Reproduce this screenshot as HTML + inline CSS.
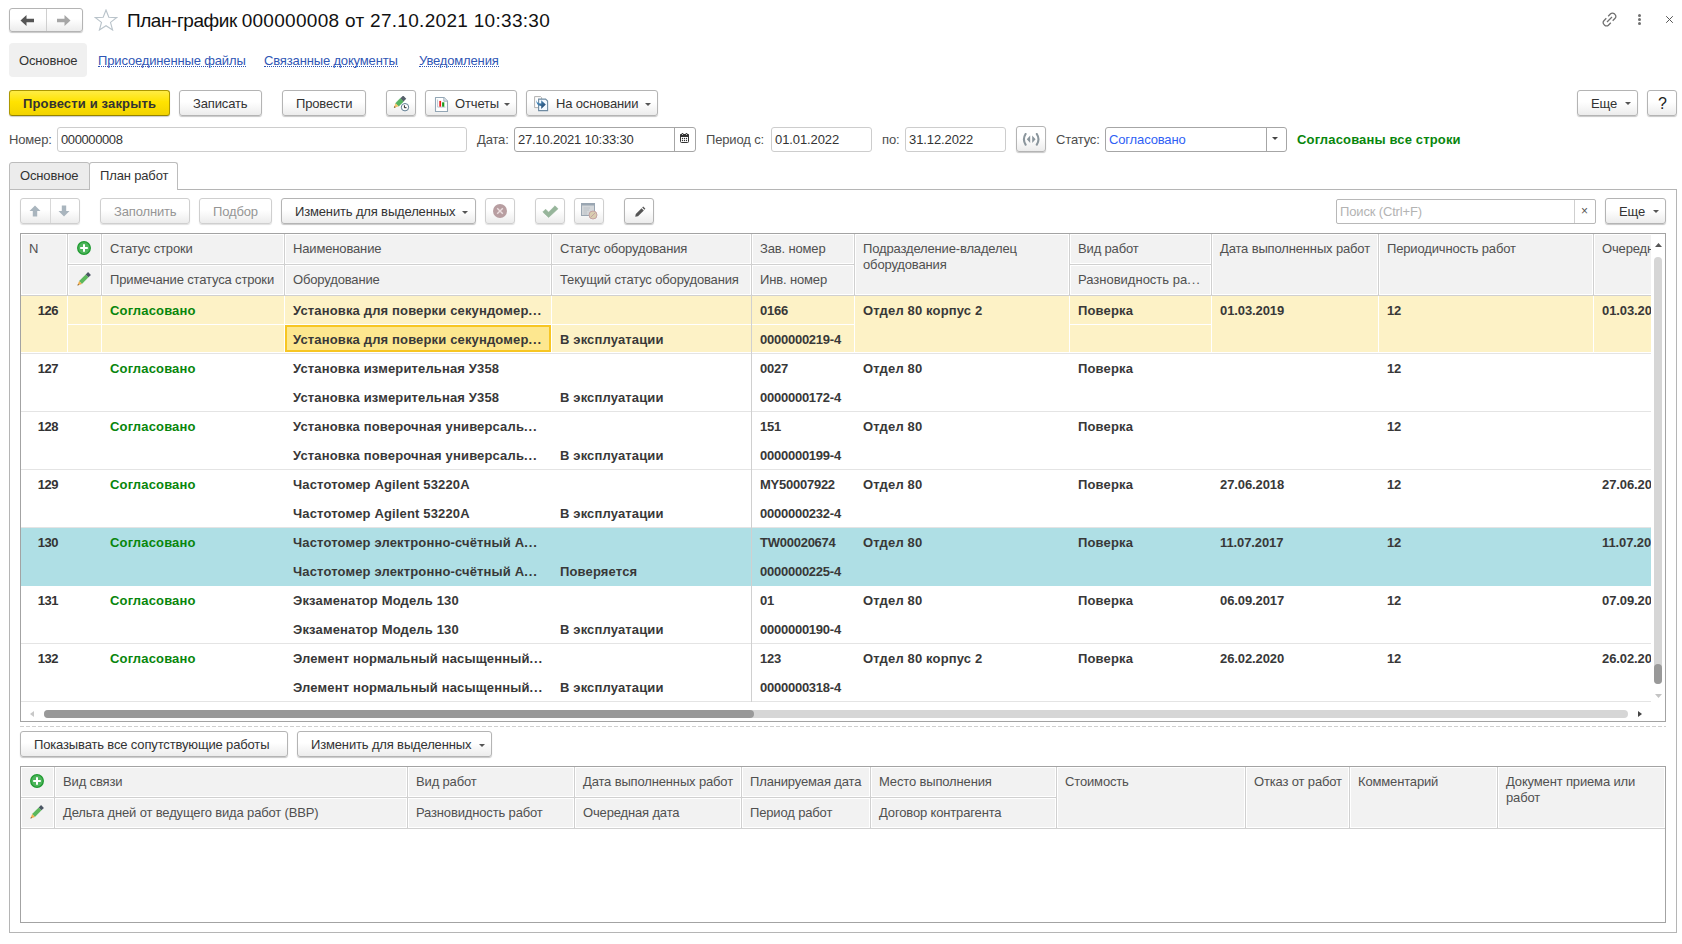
<!DOCTYPE html><html><head><meta charset="utf-8"><title>План-график</title><style>
*{box-sizing:border-box;margin:0;padding:0}
html,body{width:1682px;height:944px;overflow:hidden;background:#fff}
body{position:relative;font-family:"Liberation Sans",sans-serif;font-size:13px;color:#333;line-height:16px;letter-spacing:-0.15px}
.a{position:absolute;white-space:nowrap}
.t{position:absolute;white-space:nowrap;line-height:16px;height:16px}
.btn{position:absolute;border:1px solid #b4b4b4;border-radius:3px;background:linear-gradient(#fff 0%,#fff 45%,#ececec 100%);box-shadow:0 1px 1px rgba(0,0,0,.22)}
.btn.dis{border-color:#cfcfcf;box-shadow:0 1px 1px rgba(0,0,0,.12)}
.inp{position:absolute;border:1px solid #cdcdcd;border-radius:3px;background:#fff}
.inp.dk{border-color:#a6a6a6}
.b{font-weight:bold;letter-spacing:0.15px}
.g{color:#08860c}
.lnk{color:#3056b5;border-bottom:1px dotted #3056b5;display:inline-block;height:14px;line-height:16px}
.hd{position:absolute;background:#f2f2f2}
.vl{position:absolute;width:1px;background:#d4d4d4}
.hl{position:absolute;height:1px;background:#d4d4d4}
.dd{position:absolute;width:6px;height:3px;background:#555;clip-path:polygon(0 0,100% 0,50% 100%)}
</style></head><body>
<div class="btn " style="left:9px;top:8px;width:74px;height:24px"><div style="position:absolute;left:36px;top:0;width:1px;height:22px;background:#cfcfcf"></div><svg style="position:absolute;left:10px;top:5px" width="16" height="13" viewBox="0 0 16 13"><path d="M0.5 6.5 L6.5 1 V4.8 H14 V8.2 H6.5 V12 Z" fill="#555"/></svg><svg style="position:absolute;left:45px;top:5px" width="16" height="13" viewBox="0 0 16 13"><path d="M15.5 6.5 L9.5 1 V4.8 H2 V8.2 H9.5 V12 Z" fill="#a6a6a6"/></svg></div>
<svg class="a" style="left:94px;top:9px" width="24" height="22" viewBox="0 0 24 22"><path d="M12 1 L14.8 8.2 L22.6 8.6 L16.5 13.4 L18.6 21 L12 16.7 L5.4 21 L7.5 13.4 L1.4 8.6 L9.2 8.2 Z" fill="none" stroke="#b9c3ca" stroke-width="1.1"/></svg>
<div class="a" style="left:127px;top:10px;font-size:19px;line-height:22px;color:#111;letter-spacing:0.3px"><span style="letter-spacing:-0.45px">План-график </span>000000008 от 27.10.2021 10:33:30</div>
<svg class="a" style="left:1601px;top:11px" width="17" height="17" viewBox="0 0 17 17"><g fill="none" stroke="#707070" stroke-width="1.3"><path d="M7.2 5.2 L9.6 2.8 a2.6 2.6 0 0 1 3.7 0 l0.8 0.8 a2.6 2.6 0 0 1 0 3.7 L11.7 9.7"/><path d="M9.8 11.8 L7.4 14.2 a2.6 2.6 0 0 1 -3.7 0 l-0.8 -0.8 a2.6 2.6 0 0 1 0 -3.7 L5.3 7.3"/><path d="M6 11 L11 6"/></g></svg>
<svg class="a" style="left:1636px;top:12px" width="7" height="15" viewBox="0 0 7 15"><circle cx="3.5" cy="3.6" r="1.5" fill="#707070"/><circle cx="3.5" cy="7.6" r="1.5" fill="#707070"/><circle cx="3.5" cy="11.6" r="1.5" fill="#707070"/></svg>
<svg class="a" style="left:1666px;top:16px" width="7" height="7" viewBox="0 0 7 7"><path d="M0.2 0.2 L6.8 6.8 M6.8 0.2 L0.2 6.8" stroke="#555" stroke-width="1"/></svg>
<div class="a" style="left:9px;top:43px;width:78px;height:34px;background:#f0f0f0;border-radius:4px"></div>
<div class="t " style="left:19px;top:53px;">Основное</div>
<div class="t " style="left:98px;top:53px;"><span class="lnk">Присоединенные файлы</span></div>
<div class="t " style="left:264px;top:53px;"><span class="lnk">Связанные документы</span></div>
<div class="t " style="left:419px;top:53px;"><span class="lnk">Уведомления</span></div>
<div class="a" style="left:9px;top:90px;width:161px;height:26px;border:1px solid #ad9800;border-bottom-color:#948300;border-radius:3px;background:linear-gradient(#ffec45 0%,#ffe300 45%,#f2d300 100%);box-shadow:0 1px 1px rgba(0,0,0,.2)"></div>
<div class="t b" style="left:23px;top:96px;color:#333">Провести и закрыть</div>
<div class="btn " style="left:179px;top:90px;width:83px;height:26px"></div>
<div class="t " style="left:193px;top:96px;">Записать</div>
<div class="btn " style="left:282px;top:90px;width:84px;height:26px"></div>
<div class="t " style="left:296px;top:96px;">Провести</div>
<div class="btn " style="left:386px;top:90px;width:30px;height:26px"><svg style="position:absolute;left:3px;top:5px" width="20" height="17" viewBox="0 0 20 17"><path d="M5.51 7.17 L10.42 2.27 L13.53 5.38 L8.63 10.29 Z" fill="#55b560" stroke="#3a9a48" stroke-width="0.4"/><path d="M10.42 2.27 L13.14 -0.46 L16.26 2.66 L13.53 5.38 Z" fill="#56606b"/><path d="M3.8 12 L5.51 7.17 L8.63 10.29 Z" fill="#f4c36b"/><path d="M3.8 12 L4.49 10.07 L5.73 11.31 Z" fill="#6b5a3a"/><circle cx="15" cy="11.2" r="3.7" fill="#fff" stroke="#5f7d92" stroke-width="1"/><path d="M14.4 9.3 V11.7 H16.5" fill="none" stroke="#222" stroke-width="1"/></svg></div>
<div class="btn " style="left:425px;top:90px;width:92px;height:26px"><svg style="position:absolute;left:8px;top:5px" width="15" height="17" viewBox="0 0 15 17"><path d="M1.5 1.5 H9.8 L13.5 5.2 V15.5 H1.5 Z" fill="#fff" stroke="#93a6b5" stroke-width="1.1" stroke-linejoin="round"/><path d="M9.8 1.5 V5.2 H13.5" fill="#dfe6ec" stroke="#93a6b5" stroke-width="0.8"/><path d="M3.6 3.5 V11.1 H11.5" fill="none" stroke="#9fb0c0" stroke-width="0.7"/><rect x="5.3" y="4.9" width="1.8" height="5.8" fill="#ee1c1c"/><rect x="8.1" y="6.3" width="2.2" height="4.4" fill="#1c9a1c"/></svg></div>
<div class="t " style="left:455px;top:96px;">Отчеты</div>
<div class="dd" style="left:504px;top:103px"></div>
<div class="btn " style="left:526px;top:90px;width:132px;height:26px"><svg style="position:absolute;left:6px;top:4px" width="17" height="17" viewBox="0 0 17 17"><defs><linearGradient id="ga" x1="0" y1="0" x2="1" y2="1"><stop offset="0" stop-color="#5aa6dc"/><stop offset="1" stop-color="#1b3a5e"/></linearGradient></defs><path d="M1.6 1.6 H7.6 L8.6 2.6 V12.6 H1.6 Z" fill="#fff" stroke="#a8a8a8" stroke-width="0.9"/><path d="M5.6 4.1 H12.6 L14.6 6.1 V15.6 H5.6 Z" fill="#f3f9ff" stroke="#6f8ba2" stroke-width="1.1"/><path d="M3 4.5 Q3.6 8.4 8.2 8.4 V5.2 L12.8 9.6 L8.2 13.9 V10.9 Q3 10.6 3 4.5 Z" fill="url(#ga)"/></svg></div>
<div class="t " style="left:556px;top:96px;">На основании</div>
<div class="dd" style="left:645px;top:103px"></div>
<div class="btn " style="left:1577px;top:90px;width:61px;height:26px"></div>
<div class="t " style="left:1591px;top:96px;">Еще</div>
<div class="dd" style="left:1625px;top:102px"></div>
<div class="btn " style="left:1647px;top:90px;width:30px;height:26px"></div>
<div class="a" style="left:1658px;top:94px;font-size:16px;line-height:20px;color:#222">?</div>
<div class="t " style="left:9px;top:132px;color:#4d4d4d">Номер:</div>
<div class="inp" style="left:57px;top:127px;width:410px;height:25px"></div>
<div class="t " style="left:61px;top:132px;letter-spacing:-0.4px">000000008</div>
<div class="t " style="left:477px;top:132px;color:#4d4d4d">Дата:</div>
<div class="inp dk" style="left:514px;top:127px;width:182px;height:25px"><div style="position:absolute;left:159px;top:0;width:1px;height:23px;background:#a6a6a6"></div><svg style="position:absolute;left:165px;top:5px" width="9" height="10" viewBox="0 0 9 10"><rect x="0.5" y="1.5" width="8" height="8" rx="1" fill="#fff" stroke="#333" stroke-width="1"/><rect x="0" y="1" width="9" height="3" rx="1" fill="#333"/><circle cx="2.5" cy="1" r="1" fill="#333"/><circle cx="6.5" cy="1" r="1" fill="#333"/><circle cx="2.5" cy="1.6" r="0.5" fill="#fff"/><circle cx="6.5" cy="1.6" r="0.5" fill="#fff"/><g fill="#333"><circle cx="2.5" cy="5.5" r="0.65"/><circle cx="4.5" cy="5.5" r="0.65"/><circle cx="6.5" cy="5.5" r="0.65"/><circle cx="2.5" cy="7.5" r="0.65"/><circle cx="4.5" cy="7.5" r="0.65"/><circle cx="6.5" cy="7.5" r="0.65"/></g></svg></div>
<div class="t " style="left:518px;top:132px;letter-spacing:-0.2px">27.10.2021 10:33:30</div>
<div class="t " style="left:706px;top:132px;color:#4d4d4d">Период с:</div>
<div class="inp" style="left:771px;top:127px;width:101px;height:25px"></div>
<div class="t " style="left:775px;top:132px;letter-spacing:-0.1px">01.01.2022</div>
<div class="t " style="left:882px;top:132px;color:#4d4d4d">по:</div>
<div class="inp" style="left:905px;top:127px;width:101px;height:25px"></div>
<div class="t " style="left:909px;top:132px;letter-spacing:-0.1px">31.12.2022</div>
<div class="btn " style="left:1016px;top:126px;width:30px;height:26px"><svg style="position:absolute;left:5px;top:6px" width="19" height="13" viewBox="0 0 19 13"><path d="M3.6 1 Q0.2 6.3 3.6 11.6" fill="none" stroke="#8b969d" stroke-width="2.1" stroke-linecap="round"/><path d="M14.8 1 Q18.2 6.3 14.8 11.6" fill="none" stroke="#8b969d" stroke-width="2.1" stroke-linecap="round"/><path d="M8.2 2.6 L4.8 6.3 L8.2 10 Z M10.2 2.6 L13.6 6.3 L10.2 10 Z" fill="#8b969d"/></svg></div>
<div class="t " style="left:1056px;top:132px;color:#4d4d4d">Статус:</div>
<div class="inp dk" style="left:1105px;top:127px;width:182px;height:25px"><div style="position:absolute;left:160px;top:0;width:1px;height:23px;background:#a6a6a6"></div><div class="dd" style="left:166px;top:9px;width:6px;height:3px;background:#444"></div></div>
<div class="t " style="left:1109px;top:132px;color:#2f5ff5">Согласовано</div>
<div class="t b g" style="left:1297px;top:132px;">Согласованы все строки</div>
<div class="a" style="left:9px;top:189px;width:1668px;height:744px;border:1px solid #b5b5b5"></div>
<div class="a" style="left:9px;top:162px;width:81px;height:28px;background:#ececec;border:1px solid #bcbcbc;border-radius:3px 3px 0 0"></div>
<div class="a" style="left:89px;top:162px;width:89px;height:28px;background:#fff;border:1px solid #bcbcbc;border-bottom:none;border-radius:3px 3px 0 0"></div>
<div class="t " style="left:20px;top:168px;">Основное</div>
<div class="t " style="left:100px;top:168px;">План работ</div>
<div class="btn dis" style="left:20px;top:198px;width:60px;height:26px"><div style="position:absolute;left:29px;top:0;width:1px;height:24px;background:#d8d8d8"></div><svg style="position:absolute;left:8px;top:6px" width="12" height="12" viewBox="0 0 12 12"><path d="M6 0.5 L11.5 6 H8.2 V11.5 H3.8 V6 H0.5 Z" fill="#a9b5be"/></svg><svg style="position:absolute;left:37px;top:6px" width="12" height="12" viewBox="0 0 12 12"><path d="M6 11.5 L11.5 6 H8.2 V0.5 H3.8 V6 H0.5 Z" fill="#a9b5be"/></svg></div>
<div class="btn dis" style="left:100px;top:198px;width:90px;height:26px"></div>
<div class="t " style="left:114px;top:204px;color:#959595">Заполнить</div>
<div class="btn dis" style="left:199px;top:198px;width:73px;height:26px"></div>
<div class="t " style="left:213px;top:204px;color:#959595">Подбор</div>
<div class="btn " style="left:281px;top:198px;width:195px;height:26px"></div>
<div class="t " style="left:295px;top:204px;">Изменить для выделенных</div>
<div class="dd" style="left:462px;top:211px"></div>
<div class="btn dis" style="left:485px;top:198px;width:30px;height:26px"><svg style="position:absolute;left:7px;top:5px" width="14" height="14" viewBox="0 0 14 14"><circle cx="7" cy="7" r="7" fill="#b89ea1"/><path d="M4.2 4.2 L9.8 9.8 M9.8 4.2 L4.2 9.8" stroke="#ecdfe0" stroke-width="1.4"/></svg></div>
<div class="btn dis" style="left:535px;top:198px;width:30px;height:26px"><svg style="position:absolute;left:6px;top:5px" width="17" height="14" viewBox="0 0 17 14"><path d="M0.8 8 L3.6 5.2 L6.6 8.2 L13 1.8 L16 4.8 L6.6 13.4 Z" fill="#97b59b" stroke="#97b59b" stroke-width="0.6" stroke-linejoin="round"/></svg></div>
<div class="btn dis" style="left:574px;top:198px;width:30px;height:26px"><svg style="position:absolute;left:6px;top:4px" width="17" height="17" viewBox="0 0 17 17"><rect x="0.5" y="0.5" width="13" height="12" fill="#d3d6d9" stroke="#9aa6b2"/><rect x="0.5" y="0.5" width="13" height="2" fill="#9aa6b2"/><path d="M2.5 5 H9 M2.5 7 H8 M2.5 9 H6 M2.5 11 H6" stroke="#b8bec4" stroke-width="0.8"/><circle cx="12" cy="12" r="4" fill="#d9cdb0" stroke="#c4a3a3" stroke-width="1"/><path d="M9.5 14.5 L14.5 9.5" stroke="#c4a3a3" stroke-width="1"/></svg></div>
<div class="btn " style="left:624px;top:198px;width:30px;height:26px"><svg style="position:absolute;left:9px;top:7px" width="12" height="12" viewBox="0 0 12 12"><path d="M1.2 10.8 L1.8 8 L7.6 2.2 L9.8 4.4 L4 10.2 Z" fill="#555"/><path d="M8.2 1.6 L9.2 0.6 L11.4 2.8 L10.4 3.8 Z" fill="#555"/></svg></div>
<div class="inp dk" style="left:1336px;top:199px;width:260px;height:25px;border-color:#b8b8b8;border-radius:2px"><div style="position:absolute;left:237px;top:0;width:1px;height:23px;background:#cfcfcf"></div><div style="position:absolute;left:244px;top:3px;font-size:12px;color:#555">×</div></div>
<div class="t " style="left:1340px;top:204px;color:#b3b3b3">Поиск (Ctrl+F)</div>
<div class="btn " style="left:1605px;top:198px;width:61px;height:26px"></div>
<div class="t " style="left:1619px;top:204px;">Еще</div>
<div class="dd" style="left:1653px;top:210px"></div>
<div class="a" style="left:20px;top:233px;width:1646px;height:489px;border:1px solid #a3a3a3;background:#fff"></div>
<div class="a" style="left:21px;top:234px;width:1630px;height:62px;background:#d0d0d0"></div>
<div class="a" style="left:21px;top:234px;width:46px;height:61px;background:#f2f2f2;box-shadow:inset 0 0 0 1px #fff"></div>
<div class="a" style="left:68px;top:234px;width:33px;height:30px;background:#f2f2f2;box-shadow:inset 0 0 0 1px #fff"></div>
<div class="a" style="left:68px;top:265px;width:33px;height:30px;background:#f2f2f2;box-shadow:inset 0 0 0 1px #fff"></div>
<div class="a" style="left:102px;top:234px;width:182px;height:30px;background:#f2f2f2;box-shadow:inset 0 0 0 1px #fff"></div>
<div class="a" style="left:102px;top:265px;width:182px;height:30px;background:#f2f2f2;box-shadow:inset 0 0 0 1px #fff"></div>
<div class="a" style="left:285px;top:234px;width:266px;height:30px;background:#f2f2f2;box-shadow:inset 0 0 0 1px #fff"></div>
<div class="a" style="left:285px;top:265px;width:266px;height:30px;background:#f2f2f2;box-shadow:inset 0 0 0 1px #fff"></div>
<div class="a" style="left:552px;top:234px;width:199px;height:30px;background:#f2f2f2;box-shadow:inset 0 0 0 1px #fff"></div>
<div class="a" style="left:552px;top:265px;width:199px;height:30px;background:#f2f2f2;box-shadow:inset 0 0 0 1px #fff"></div>
<div class="a" style="left:752px;top:234px;width:102px;height:30px;background:#f2f2f2;box-shadow:inset 0 0 0 1px #fff"></div>
<div class="a" style="left:752px;top:265px;width:102px;height:30px;background:#f2f2f2;box-shadow:inset 0 0 0 1px #fff"></div>
<div class="a" style="left:855px;top:234px;width:214px;height:61px;background:#f2f2f2;box-shadow:inset 0 0 0 1px #fff"></div>
<div class="a" style="left:1070px;top:234px;width:141px;height:30px;background:#f2f2f2;box-shadow:inset 0 0 0 1px #fff"></div>
<div class="a" style="left:1070px;top:265px;width:141px;height:30px;background:#f2f2f2;box-shadow:inset 0 0 0 1px #fff"></div>
<div class="a" style="left:1212px;top:234px;width:166px;height:61px;background:#f2f2f2;box-shadow:inset 0 0 0 1px #fff"></div>
<div class="a" style="left:1379px;top:234px;width:214px;height:61px;background:#f2f2f2;box-shadow:inset 0 0 0 1px #fff"></div>
<div class="a" style="left:1594px;top:234px;width:58px;height:61px;background:#f2f2f2;box-shadow:inset 0 0 0 1px #fff"></div>
<div class="t " style="left:29px;top:241px;color:#505050">N</div>
<svg class="a" style="left:77px;top:241px" width="14" height="14" viewBox="0 0 14 14"><circle cx="7" cy="7" r="6.3" fill="#4db55b" stroke="#1f9a30" stroke-width="1.3"/><path d="M7 3.2 V10.8 M3.2 7 H10.8" stroke="#fff" stroke-width="2"/></svg>
<svg class="a" style="left:76px;top:272px" width="15" height="15" viewBox="0 0 15 15"><path d="M3.09 9.09 L9.69 2.49 L12.51 5.31 L5.91 11.91 Z" fill="#5cb85c"/><path d="M9.69 2.49 L12.09 0.09 L14.91 2.91 L12.51 5.31 Z" fill="#4a5563"/><path d="M1.5 13.5 L3.09 9.09 L5.91 11.91 Z" fill="#f0ad4e"/><path d="M1.5 13.5 L2.01 12.09 L2.91 12.99 Z" fill="#333"/></svg>
<div class="t " style="left:110px;top:241px;color:#505050">Статус строки</div>
<div class="t " style="left:110px;top:272px;color:#505050">Примечание статуса строки</div>
<div class="t " style="left:293px;top:241px;color:#505050">Наименование</div>
<div class="t " style="left:293px;top:272px;color:#505050">Оборудование</div>
<div class="t " style="left:560px;top:241px;color:#505050">Статус оборудования</div>
<div class="t " style="left:560px;top:272px;color:#505050">Текущий статус оборудования</div>
<div class="t " style="left:760px;top:241px;color:#505050">Зав. номер</div>
<div class="t " style="left:760px;top:272px;color:#505050">Инв. номер</div>
<div class="t " style="left:863px;top:241px;color:#505050">Подразделение-владелец</div>
<div class="t " style="left:863px;top:257px;color:#505050">оборудования</div>
<div class="t " style="left:1078px;top:241px;color:#505050">Вид работ</div>
<div class="t " style="left:1078px;top:272px;color:#505050;letter-spacing:0px">Разновидность ра<span style="letter-spacing:0.9px">...</span></div>
<div class="t " style="left:1220px;top:241px;color:#505050">Дата выполненных работ</div>
<div class="t " style="left:1387px;top:241px;color:#505050">Периодичность работ</div>
<div class="a" style="left:1594px;top:234px;width:57px;height:40px;overflow:hidden"><div class="t" style="left:8px;top:7px;color:#505050">Очередная дата</div></div>
<div class="a" style="left:21px;top:296px;width:1630px;height:406px;overflow:hidden">
<div class="a" style="left:0;top:0px;width:1630px;height:56px;background:#fdf2c6"></div>
<div class="a" style="left:46px;top:0px;width:1px;height:57px;background:#fff"></div>
<div class="a" style="left:80px;top:0px;width:1px;height:57px;background:#fff"></div>
<div class="a" style="left:263px;top:0px;width:1px;height:57px;background:#fff"></div>
<div class="a" style="left:530px;top:0px;width:1px;height:57px;background:#fff"></div>
<div class="a" style="left:730px;top:0px;width:1px;height:57px;background:#fff"></div>
<div class="a" style="left:833px;top:0px;width:1px;height:57px;background:#fff"></div>
<div class="a" style="left:1048px;top:0px;width:1px;height:57px;background:#fff"></div>
<div class="a" style="left:1190px;top:0px;width:1px;height:57px;background:#fff"></div>
<div class="a" style="left:1357px;top:0px;width:1px;height:57px;background:#fff"></div>
<div class="a" style="left:1572px;top:0px;width:1px;height:57px;background:#fff"></div>
<div class="a" style="left:46px;top:28px;width:684px;height:1px;background:#fff"></div>
<div class="a" style="left:730px;top:28px;width:103px;height:1px;background:#fff"></div>
<div class="a" style="left:1048px;top:28px;width:142px;height:1px;background:#fff"></div>
<div class="a" style="left:0;top:56px;width:1630px;height:1px;background:#fff"></div>
<div class="a" style="left:264px;top:29px;width:266px;height:27px;border:2px solid #f7c623;background:#fde78f"></div>
<div class="a" style="left:0;top:57px;width:1630px;height:1px;background:#e4e4e4"></div>
<div class="t b" style="left:-1px;top:7px;width:38px;text-align:right;letter-spacing:-0.5px">126</div>
<div class="t b g" style="left:89px;top:7px;letter-spacing:0.15px">Согласовано</div>
<div class="t b" style="left:272px;top:7px;color:#383838;letter-spacing:0.15px">Установка для поверки секундомер<span style="letter-spacing:0.9px">...</span></div>
<div class="t b" style="left:272px;top:36px;color:#383838;letter-spacing:0.15px">Установка для поверки секундомер<span style="letter-spacing:0.9px">...</span></div>
<div class="t b" style="left:539px;top:36px;color:#383838;letter-spacing:0.15px">В эксплуатации</div>
<div class="t b" style="left:739px;top:7px;color:#383838;letter-spacing:-0.25px">0166</div>
<div class="t b" style="left:739px;top:36px;color:#383838;letter-spacing:-0.25px">0000000219-4</div>
<div class="t b" style="left:842px;top:7px;color:#383838;letter-spacing:0.15px">Отдел 80 корпус 2</div>
<div class="t b" style="left:1057px;top:7px;color:#383838;letter-spacing:0.15px">Поверка</div>
<div class="t b" style="left:1199px;top:7px;color:#383838;letter-spacing:-0.1px">01.03.2019</div>
<div class="t b" style="left:1366px;top:7px;color:#383838;letter-spacing:-0.25px">12</div>
<div class="t b" style="left:1581px;top:7px;color:#383838;letter-spacing:-0.1px">01.03.20</div>
<div class="a" style="left:0;top:115px;width:1630px;height:1px;background:#e4e4e4"></div>
<div class="t b" style="left:-1px;top:65px;width:38px;text-align:right;letter-spacing:-0.5px">127</div>
<div class="t b g" style="left:89px;top:65px;letter-spacing:0.15px">Согласовано</div>
<div class="t b" style="left:272px;top:65px;color:#383838;letter-spacing:0.15px">Установка измерительная У358</div>
<div class="t b" style="left:272px;top:94px;color:#383838;letter-spacing:0.15px">Установка измерительная У358</div>
<div class="t b" style="left:539px;top:94px;color:#383838;letter-spacing:0.15px">В эксплуатации</div>
<div class="t b" style="left:739px;top:65px;color:#383838;letter-spacing:-0.25px">0027</div>
<div class="t b" style="left:739px;top:94px;color:#383838;letter-spacing:-0.25px">0000000172-4</div>
<div class="t b" style="left:842px;top:65px;color:#383838;letter-spacing:0.15px">Отдел 80</div>
<div class="t b" style="left:1057px;top:65px;color:#383838;letter-spacing:0.15px">Поверка</div>
<div class="t b" style="left:1199px;top:65px;color:#383838;letter-spacing:-0.1px"></div>
<div class="t b" style="left:1366px;top:65px;color:#383838;letter-spacing:-0.25px">12</div>
<div class="t b" style="left:1581px;top:65px;color:#383838;letter-spacing:-0.1px"></div>
<div class="a" style="left:0;top:173px;width:1630px;height:1px;background:#e4e4e4"></div>
<div class="t b" style="left:-1px;top:123px;width:38px;text-align:right;letter-spacing:-0.5px">128</div>
<div class="t b g" style="left:89px;top:123px;letter-spacing:0.15px">Согласовано</div>
<div class="t b" style="left:272px;top:123px;color:#383838;letter-spacing:0.15px">Установка поверочная универсаль<span style="letter-spacing:0.9px">...</span></div>
<div class="t b" style="left:272px;top:152px;color:#383838;letter-spacing:0.15px">Установка поверочная универсаль<span style="letter-spacing:0.9px">...</span></div>
<div class="t b" style="left:539px;top:152px;color:#383838;letter-spacing:0.15px">В эксплуатации</div>
<div class="t b" style="left:739px;top:123px;color:#383838;letter-spacing:-0.25px">151</div>
<div class="t b" style="left:739px;top:152px;color:#383838;letter-spacing:-0.25px">0000000199-4</div>
<div class="t b" style="left:842px;top:123px;color:#383838;letter-spacing:0.15px">Отдел 80</div>
<div class="t b" style="left:1057px;top:123px;color:#383838;letter-spacing:0.15px">Поверка</div>
<div class="t b" style="left:1199px;top:123px;color:#383838;letter-spacing:-0.1px"></div>
<div class="t b" style="left:1366px;top:123px;color:#383838;letter-spacing:-0.25px">12</div>
<div class="t b" style="left:1581px;top:123px;color:#383838;letter-spacing:-0.1px"></div>
<div class="a" style="left:0;top:231px;width:1630px;height:1px;background:#e4e4e4"></div>
<div class="t b" style="left:-1px;top:181px;width:38px;text-align:right;letter-spacing:-0.5px">129</div>
<div class="t b g" style="left:89px;top:181px;letter-spacing:0.15px">Согласовано</div>
<div class="t b" style="left:272px;top:181px;color:#383838;letter-spacing:0.15px">Частотомер Agilent 53220A</div>
<div class="t b" style="left:272px;top:210px;color:#383838;letter-spacing:0.15px">Частотомер Agilent 53220A</div>
<div class="t b" style="left:539px;top:210px;color:#383838;letter-spacing:0.15px">В эксплуатации</div>
<div class="t b" style="left:739px;top:181px;color:#383838;letter-spacing:-0.25px">MY50007922</div>
<div class="t b" style="left:739px;top:210px;color:#383838;letter-spacing:-0.25px">0000000232-4</div>
<div class="t b" style="left:842px;top:181px;color:#383838;letter-spacing:0.15px">Отдел 80</div>
<div class="t b" style="left:1057px;top:181px;color:#383838;letter-spacing:0.15px">Поверка</div>
<div class="t b" style="left:1199px;top:181px;color:#383838;letter-spacing:-0.1px">27.06.2018</div>
<div class="t b" style="left:1366px;top:181px;color:#383838;letter-spacing:-0.25px">12</div>
<div class="t b" style="left:1581px;top:181px;color:#383838;letter-spacing:-0.1px">27.06.20</div>
<div class="a" style="left:0;top:232px;width:1630px;height:58px;background:#afdfe5"></div>
<div class="t b" style="left:-1px;top:239px;width:38px;text-align:right;letter-spacing:-0.5px">130</div>
<div class="t b g" style="left:89px;top:239px;letter-spacing:0.15px">Согласовано</div>
<div class="t b" style="left:272px;top:239px;color:#383838;letter-spacing:0.15px">Частотомер электронно-счётный А<span style="letter-spacing:0.9px">...</span></div>
<div class="t b" style="left:272px;top:268px;color:#383838;letter-spacing:0.15px">Частотомер электронно-счётный А<span style="letter-spacing:0.9px">...</span></div>
<div class="t b" style="left:539px;top:268px;color:#383838;letter-spacing:0.15px">Поверяется</div>
<div class="t b" style="left:739px;top:239px;color:#383838;letter-spacing:-0.25px">TW00020674</div>
<div class="t b" style="left:739px;top:268px;color:#383838;letter-spacing:-0.25px">0000000225-4</div>
<div class="t b" style="left:842px;top:239px;color:#383838;letter-spacing:0.15px">Отдел 80</div>
<div class="t b" style="left:1057px;top:239px;color:#383838;letter-spacing:0.15px">Поверка</div>
<div class="t b" style="left:1199px;top:239px;color:#383838;letter-spacing:-0.1px">11.07.2017</div>
<div class="t b" style="left:1366px;top:239px;color:#383838;letter-spacing:-0.25px">12</div>
<div class="t b" style="left:1581px;top:239px;color:#383838;letter-spacing:-0.1px">11.07.20</div>
<div class="a" style="left:0;top:347px;width:1630px;height:1px;background:#e4e4e4"></div>
<div class="t b" style="left:-1px;top:297px;width:38px;text-align:right;letter-spacing:-0.5px">131</div>
<div class="t b g" style="left:89px;top:297px;letter-spacing:0.15px">Согласовано</div>
<div class="t b" style="left:272px;top:297px;color:#383838;letter-spacing:0.15px">Экзаменатор Модель 130</div>
<div class="t b" style="left:272px;top:326px;color:#383838;letter-spacing:0.15px">Экзаменатор Модель 130</div>
<div class="t b" style="left:539px;top:326px;color:#383838;letter-spacing:0.15px">В эксплуатации</div>
<div class="t b" style="left:739px;top:297px;color:#383838;letter-spacing:-0.25px">01</div>
<div class="t b" style="left:739px;top:326px;color:#383838;letter-spacing:-0.25px">0000000190-4</div>
<div class="t b" style="left:842px;top:297px;color:#383838;letter-spacing:0.15px">Отдел 80</div>
<div class="t b" style="left:1057px;top:297px;color:#383838;letter-spacing:0.15px">Поверка</div>
<div class="t b" style="left:1199px;top:297px;color:#383838;letter-spacing:-0.1px">06.09.2017</div>
<div class="t b" style="left:1366px;top:297px;color:#383838;letter-spacing:-0.25px">12</div>
<div class="t b" style="left:1581px;top:297px;color:#383838;letter-spacing:-0.1px">07.09.20</div>
<div class="a" style="left:0;top:405px;width:1630px;height:1px;background:#e4e4e4"></div>
<div class="t b" style="left:-1px;top:355px;width:38px;text-align:right;letter-spacing:-0.5px">132</div>
<div class="t b g" style="left:89px;top:355px;letter-spacing:0.15px">Согласовано</div>
<div class="t b" style="left:272px;top:355px;color:#383838;letter-spacing:0.15px">Элемент нормальный насыщенный<span style="letter-spacing:0.9px">...</span></div>
<div class="t b" style="left:272px;top:384px;color:#383838;letter-spacing:0.15px">Элемент нормальный насыщенный<span style="letter-spacing:0.9px">...</span></div>
<div class="t b" style="left:539px;top:384px;color:#383838;letter-spacing:0.15px">В эксплуатации</div>
<div class="t b" style="left:739px;top:355px;color:#383838;letter-spacing:-0.25px">123</div>
<div class="t b" style="left:739px;top:384px;color:#383838;letter-spacing:-0.25px">0000000318-4</div>
<div class="t b" style="left:842px;top:355px;color:#383838;letter-spacing:0.15px">Отдел 80 корпус 2</div>
<div class="t b" style="left:1057px;top:355px;color:#383838;letter-spacing:0.15px">Поверка</div>
<div class="t b" style="left:1199px;top:355px;color:#383838;letter-spacing:-0.1px">26.02.2020</div>
<div class="t b" style="left:1366px;top:355px;color:#383838;letter-spacing:-0.25px">12</div>
<div class="t b" style="left:1581px;top:355px;color:#383838;letter-spacing:-0.1px">26.02.20</div>
</div>
<div class="a" style="left:751px;top:296px;width:1px;height:406px;background:#d0d0d0"></div>
<div class="a" style="left:1651px;top:234px;width:14px;height:487px;background:#fff"></div>
<div class="a" style="left:1655px;top:243px;width:7px;height:4px;background:#555;clip-path:polygon(50% 0,100% 100%,0 100%)"></div>
<div class="a" style="left:1654px;top:257px;width:8px;height:427px;border-radius:4px;background:#d6d6d6"></div>
<div class="a" style="left:1654px;top:664px;width:8px;height:20px;border-radius:4px;background:#999"></div>
<div class="a" style="left:1655px;top:694px;width:7px;height:4px;background:#c4c4c4;clip-path:polygon(0 0,100% 0,50% 100%)"></div>
<div class="a" style="left:21px;top:702px;width:1630px;height:19px;background:#fff"></div>
<div class="a" style="left:30px;top:711px;width:4px;height:6px;background:#c8c8c8;clip-path:polygon(100% 0,100% 100%,0 50%)"></div>
<div class="a" style="left:44px;top:710px;width:1584px;height:8px;border-radius:4px;background:#d6d6d6"></div>
<div class="a" style="left:44px;top:710px;width:710px;height:8px;border-radius:4px;background:#999"></div>
<div class="a" style="left:1638px;top:711px;width:4px;height:6px;background:#444;clip-path:polygon(0 0,100% 50%,0 100%)"></div>
<div class="a" style="left:20px;top:726px;width:1646px;height:1px;background:repeating-linear-gradient(90deg,#cfcfcf 0 4px,transparent 4px 6px)"></div>
<div class="btn " style="left:20px;top:731px;width:268px;height:26px"></div>
<div class="t " style="left:34px;top:737px;">Показывать все сопутствующие работы</div>
<div class="btn " style="left:297px;top:731px;width:195px;height:26px"></div>
<div class="t " style="left:311px;top:737px;">Изменить для выделенных</div>
<div class="dd" style="left:479px;top:744px"></div>
<div class="a" style="left:20px;top:766px;width:1646px;height:157px;border:1px solid #a3a3a3;background:#fff"></div>
<div class="a" style="left:21px;top:767px;width:1644px;height:62px;background:#d0d0d0"></div>
<div class="a" style="left:21px;top:767px;width:33px;height:30px;background:#f2f2f2;box-shadow:inset 0 0 0 1px #fff"></div>
<div class="a" style="left:21px;top:798px;width:33px;height:30px;background:#f2f2f2;box-shadow:inset 0 0 0 1px #fff"></div>
<div class="a" style="left:55px;top:767px;width:352px;height:30px;background:#f2f2f2;box-shadow:inset 0 0 0 1px #fff"></div>
<div class="a" style="left:55px;top:798px;width:352px;height:30px;background:#f2f2f2;box-shadow:inset 0 0 0 1px #fff"></div>
<div class="a" style="left:408px;top:767px;width:166px;height:30px;background:#f2f2f2;box-shadow:inset 0 0 0 1px #fff"></div>
<div class="a" style="left:408px;top:798px;width:166px;height:30px;background:#f2f2f2;box-shadow:inset 0 0 0 1px #fff"></div>
<div class="a" style="left:575px;top:767px;width:166px;height:30px;background:#f2f2f2;box-shadow:inset 0 0 0 1px #fff"></div>
<div class="a" style="left:575px;top:798px;width:166px;height:30px;background:#f2f2f2;box-shadow:inset 0 0 0 1px #fff"></div>
<div class="a" style="left:742px;top:767px;width:128px;height:30px;background:#f2f2f2;box-shadow:inset 0 0 0 1px #fff"></div>
<div class="a" style="left:742px;top:798px;width:128px;height:30px;background:#f2f2f2;box-shadow:inset 0 0 0 1px #fff"></div>
<div class="a" style="left:871px;top:767px;width:185px;height:30px;background:#f2f2f2;box-shadow:inset 0 0 0 1px #fff"></div>
<div class="a" style="left:871px;top:798px;width:185px;height:30px;background:#f2f2f2;box-shadow:inset 0 0 0 1px #fff"></div>
<div class="a" style="left:1057px;top:767px;width:188px;height:61px;background:#f2f2f2;box-shadow:inset 0 0 0 1px #fff"></div>
<div class="a" style="left:1246px;top:767px;width:103px;height:61px;background:#f2f2f2;box-shadow:inset 0 0 0 1px #fff"></div>
<div class="a" style="left:1350px;top:767px;width:147px;height:61px;background:#f2f2f2;box-shadow:inset 0 0 0 1px #fff"></div>
<div class="a" style="left:1498px;top:767px;width:167px;height:61px;background:#f2f2f2;box-shadow:inset 0 0 0 1px #fff"></div>
<svg class="a" style="left:30px;top:774px" width="14" height="14" viewBox="0 0 14 14"><circle cx="7" cy="7" r="6.3" fill="#4db55b" stroke="#1f9a30" stroke-width="1.3"/><path d="M7 3.2 V10.8 M3.2 7 H10.8" stroke="#fff" stroke-width="2"/></svg>
<svg class="a" style="left:29px;top:805px" width="15" height="15" viewBox="0 0 15 15"><path d="M3.09 9.09 L9.69 2.49 L12.51 5.31 L5.91 11.91 Z" fill="#5cb85c"/><path d="M9.69 2.49 L12.09 0.09 L14.91 2.91 L12.51 5.31 Z" fill="#4a5563"/><path d="M1.5 13.5 L3.09 9.09 L5.91 11.91 Z" fill="#f0ad4e"/><path d="M1.5 13.5 L2.01 12.09 L2.91 12.99 Z" fill="#333"/></svg>
<div class="t " style="left:63px;top:774px;color:#505050">Вид связи</div>
<div class="t " style="left:63px;top:805px;color:#505050">Дельта дней от ведущего вида работ (ВВР)</div>
<div class="t " style="left:416px;top:774px;color:#505050">Вид работ</div>
<div class="t " style="left:416px;top:805px;color:#505050">Разновидность работ</div>
<div class="t " style="left:583px;top:774px;color:#505050">Дата выполненных работ</div>
<div class="t " style="left:583px;top:805px;color:#505050">Очередная дата</div>
<div class="t " style="left:750px;top:774px;color:#505050">Планируемая дата</div>
<div class="t " style="left:750px;top:805px;color:#505050">Период работ</div>
<div class="t " style="left:879px;top:774px;color:#505050">Место выполнения</div>
<div class="t " style="left:879px;top:805px;color:#505050">Договор контрагента</div>
<div class="t " style="left:1065px;top:774px;color:#505050">Стоимость</div>
<div class="t " style="left:1254px;top:774px;color:#505050">Отказ от работ</div>
<div class="t " style="left:1358px;top:774px;color:#505050">Комментарий</div>
<div class="t " style="left:1506px;top:774px;color:#505050">Документ приема или</div>
<div class="t " style="left:1506px;top:790px;color:#505050">работ</div>
</body></html>
